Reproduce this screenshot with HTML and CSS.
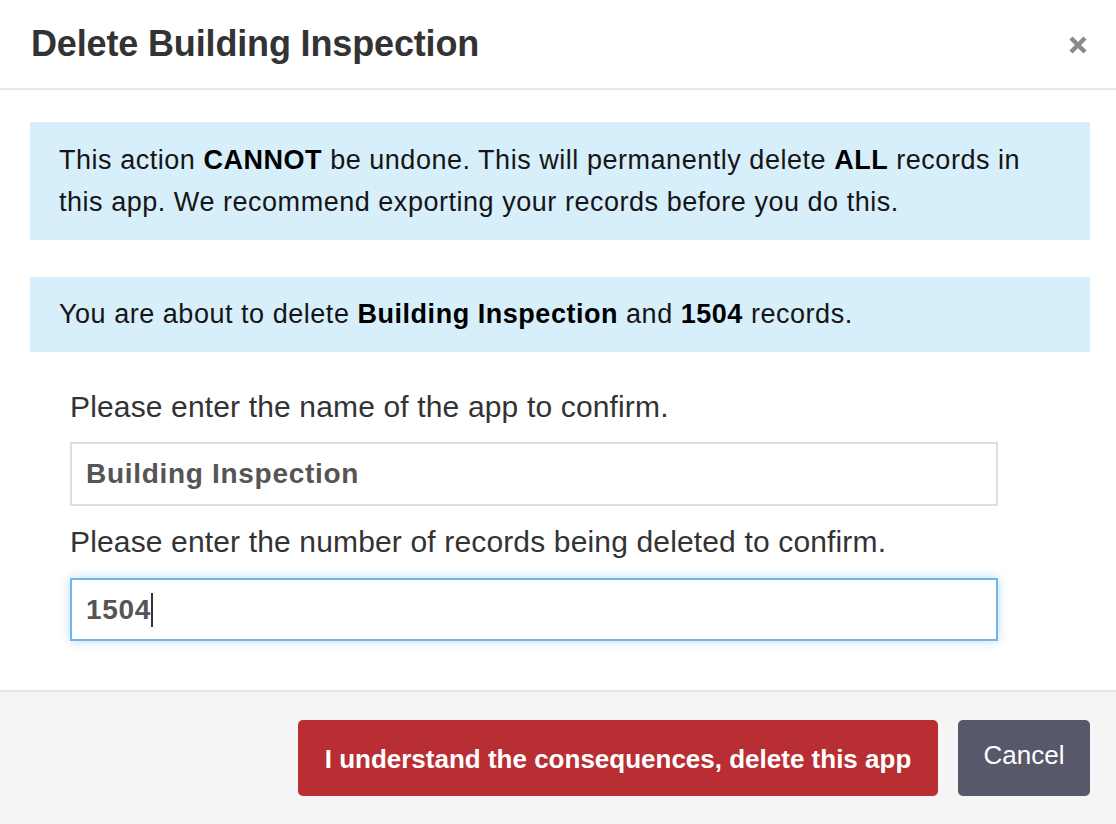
FILE: index.html
```html
<!DOCTYPE html>
<html>
<head>
<meta charset="utf-8">
<link rel="stylesheet" href="styles.css">
</head>
<body>
<div class="modal">
  <div class="modal-header">
    <h1 class="modal-title">Delete Building Inspection</h1>
    <button class="close" type="button" aria-label="Close">
      <svg width="20" height="20" viewBox="0 0 20 20"><path d="M3 3 L17 17 M17 3 L3 17" stroke="#8a8a8a" stroke-width="4.5" stroke-linecap="butt"/></svg>
    </button>
  </div>
  <div class="modal-body">
    <div class="alert">This action <b>CANNOT</b> be undone. This will permanently delete <b>ALL</b> records in this app. We recommend exporting your records before you do this.</div>
    <div class="alert alert-second">You are about to delete <b>Building Inspection</b> and <b>1504</b> records.</div>
    <div class="form">
      <label class="label">Please enter the name of the app to confirm.</label>
      <div class="input input-first">Building Inspection</div>
      <label class="label label-second">Please enter the number of records being deleted to confirm.</label>
      <div class="input input-focus">1504<span class="caret"></span></div>
    </div>
  </div>
  <div class="modal-footer">
    <button class="btn btn-danger" type="button">I understand the consequences, delete this app</button>
    <button class="btn btn-cancel" type="button">Cancel</button>
  </div>
</div>
</body>
</html>
```
FILE: styles.css
```css
html, body {
  margin: 0;
  padding: 0;
  background: #ffffff;
}
body {
  font-family: "Liberation Sans", Arial, Helvetica, sans-serif;
  color: #1c1c1c;
}
.modal {
  width: 1116px;
  height: 824px;
  display: flex;
  flex-direction: column;
  background: #ffffff;
}
.modal-header {
  height: 90px;
  box-sizing: border-box;
  border-bottom: 2px solid #e8e8e8;
  display: flex;
  align-items: center;
  justify-content: space-between;
  padding: 0 28px 0 31px;
}
.modal-title {
  margin: 0;
  font-size: 36px;
  letter-spacing: -0.15px;
  font-weight: bold;
  color: #333333;
}
.close {
  border: 0;
  background: none;
  padding: 0;
  width: 20px;
  height: 20px;
  display: flex;
  margin-top: 2px;
}
.modal-body {
  flex: 1;
  padding: 32px 26px 0 30px;
}
.alert {
  background: #d7eefb;
  padding: 17px 20px 17px 29px;
  font-size: 27px;
  letter-spacing: 0.53px;
  line-height: 42px;
  color: #151515;
}
.alert b {
  color: #000000;
}
.alert-second {
  margin-top: 37px;
  padding-top: 16px;
  padding-bottom: 17px;
}
.form {
  width: 928px;
  margin-left: 40px;
  padding-top: 34px;
}
.label {
  display: block;
  font-size: 30px;
  letter-spacing: 0.15px;
  line-height: 42px;
  color: #333333;
  margin-bottom: 14px;
}
.label-second {
  margin-bottom: 15px;
}
.input {
  box-sizing: border-box;
  height: 64px;
  border: 2px solid #dddddd;
  padding: 0 14px;
  display: flex;
  align-items: center;
  font-size: 28px;
  letter-spacing: 0.7px;
  font-weight: bold;
  color: #555555;
}
.input-first {
  margin-bottom: 15px;
}
.input-focus {
  height: 63px;
  border-color: #6fb6ee;
  box-shadow: 0 0 10px rgba(102, 175, 233, 0.45);
}
.caret {
  display: inline-block;
  width: 2px;
  height: 34px;
  background: #333333;
  margin-left: 0;
}
.modal-footer {
  height: 134px;
  box-sizing: border-box;
  border-top: 2px solid #e6e6e6;
  background: #f5f5f5;
  display: flex;
  justify-content: flex-end;
  align-items: flex-start;
  padding: 28px 26px 0 0;
  gap: 20px;
}
.btn {
  height: 76px;
  border: 0;
  border-radius: 5px;
  font-family: "Liberation Sans", Arial, Helvetica, sans-serif;
  font-size: 26px;
  color: #ffffff;
  padding: 0 20px;
}
.btn-danger {
  background: #b92e32;
  font-weight: bold;
  width: 640px;
  padding-top: 2px;
}
.btn-cancel {
  background: #575869;
  width: 132px;
  padding-bottom: 6px;
}
```
